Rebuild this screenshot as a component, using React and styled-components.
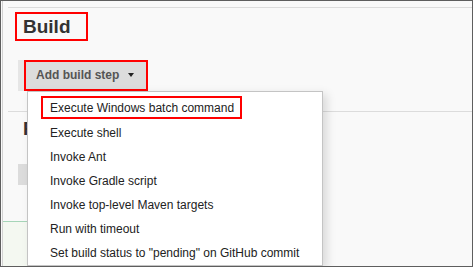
import React from 'react';
import styled, { createGlobalStyle } from 'styled-components';

const GlobalStyle = createGlobalStyle`
  html, body {
    margin: 0;
    padding: 0;
    background: #fff;
  }
  body {
    font-family: 'Liberation Sans', Arial, sans-serif;
  }
`;

const Frame = styled.div`
  position: relative;
  width: 473px;
  height: 267px;
  box-sizing: border-box;
  border: 1px solid #5e5e5e;
  background-color: #f9f9f9;
  overflow: hidden;
`;

const Panel = styled.div`
  display: flex;
  flex-direction: column;
  align-items: flex-start;
  margin-left: 1px;
  height: 100%;
  border-left: 1px solid #d2d2d2;
`;

const Rule = styled.div`
  align-self: stretch;
  height: 1px;
  background-color: #dcdcdc;
  margin: ${(p) => p.$top}px 0 0 5px;
`;

const Title = styled.h2`
  box-sizing: border-box;
  width: 73px;
  margin: 4px 0 0 12px;
  padding: 0 0 0 6px;
  border: 2px solid #f00;
  font-size: 19px;
  line-height: 25px;
  font-weight: bold;
  color: #333;
`;

const SubTitle = styled.h2`
  margin: 5px 0 0 20px;
  font-size: 19px;
  line-height: 25px;
  font-weight: bold;
  color: #333;
`;

const StepWrap = styled.div`
  position: relative;
  display: flex;
  margin: 19px 0 0 15px;
  padding-left: 6px;
  background-color: #e6e6e6;
`;

const StepButton = styled.button`
  display: flex;
  align-items: center;
  box-sizing: border-box;
  width: 124px;
  height: 31px;
  padding: 0 0 0 10px;
  border: 2px solid #f00;
  background-color: #dcdcdc;
  font-family: 'Liberation Sans', Arial, sans-serif;
  font-size: 12px;
  font-weight: bold;
  color: #555;
  cursor: pointer;
`;

const Caret = styled.span`
  width: 0;
  height: 0;
  margin-left: 9px;
  border-left: 3.5px solid transparent;
  border-right: 3.5px solid transparent;
  border-top: 4px solid #222;
`;

const Menu = styled.ul`
  position: absolute;
  left: 9px;
  top: 31px;
  z-index: 2;
  box-sizing: border-box;
  width: 296px;
  margin: 0;
  padding: 5px 0 0;
  list-style: none;
  background-color: #fff;
  border: 1px solid #c4c4c4;
  box-shadow: 4px 3px 9px rgba(0, 0, 0, 0.13);
`;

const MenuItem = styled.li`
  display: flex;
  align-items: center;
  height: 24px;
  padding-left: ${(p) => (p.$marked ? 13 : 22)}px;
  font-size: 12px;
  color: #222;
  white-space: nowrap;
`;

const Marked = styled.span`
  display: inline-flex;
  align-items: center;
  box-sizing: border-box;
  height: 23px;
  padding: 0 6px 0 7px;
  border: 2px solid #f00;
  margin-top: -2px;
`;

const GrayButton = styled.div`
  width: 120px;
  height: 28px;
  margin: 23px 0 0 15px;
  background-color: #dcdcdc;
`;

const SaveBar = styled.div`
  width: 180px;
  height: 60px;
  margin-top: 36px;
  border-top: 1px solid #a6d5b8;
  background-color: #f4f8f1;
`;

const steps = [
  'Execute shell',
  'Invoke Ant',
  'Invoke Gradle script',
  'Invoke top-level Maven targets',
  'Run with timeout',
  'Set build status to "pending" on GitHub commit',
];

const App = () => {
  return (
    <>
      <GlobalStyle />
      <Frame>
        <Panel>
          <Rule $top={6} />
          <Title>Build</Title>
          <StepWrap>
            <StepButton type='button'>
              Add build step
              <Caret />
            </StepButton>
            <Menu>
              <MenuItem $marked>
                <Marked>Execute Windows batch command</Marked>
              </MenuItem>
              {steps.map((s) => (
                <MenuItem key={s}>{s}</MenuItem>
              ))}
            </Menu>
          </StepWrap>
          <Rule $top={20} />
          <SubTitle>Post-build Actions</SubTitle>
          <GrayButton />
          <SaveBar />
        </Panel>
      </Frame>
    </>
  );
};

export default App;
